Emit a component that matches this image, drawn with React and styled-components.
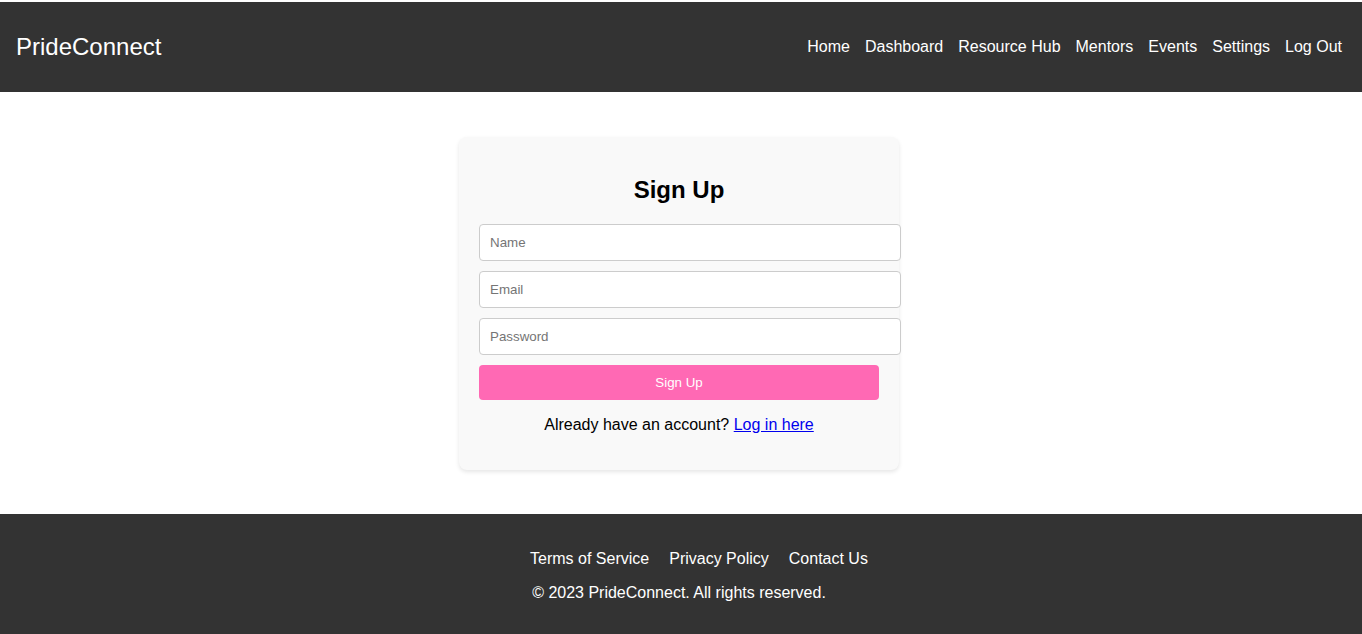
import React from 'react';
import styled, { createGlobalStyle } from 'styled-components';

const GlobalStyle = createGlobalStyle`
  body {
    margin: 0;
    padding-top: 2px;
    background: #fff;
    font-family: "Liberation Sans", Arial, sans-serif;
  }
`;

const Header = styled.header`
  background-color: #333;
  color: #fff;
  height: 90px;
  display: flex;
  align-items: center;
  justify-content: space-between;
  padding: 0 20px 0 16px;
`;

const Logo = styled.div`
  font-size: 24px;
`;

const Nav = styled.nav`
  display: flex;
  gap: 15px;
  margin-top: -1px;
`;

const NavLink = styled.a`
  color: #fff;
  text-decoration: none;
  font-size: 16px;
`;

const Main = styled.main`
  padding: 45px 0 44px;
`;

const Card = styled.div`
  width: 400px;
  margin: 0 auto;
  padding: 20px;
  background-color: #f9f9f9;
  border-radius: 8px;
  box-shadow: 0 2px 4px rgba(0, 0, 0, 0.1);
  position: relative;
  left: -2px;
`;

const Title = styled.h2`
  text-align: center;
  font-size: 24px;
  margin: 19px 0 20px;
  line-height: 28px;
`;

const Form = styled.form`
  display: flex;
  flex-direction: column;
  gap: 10px;
`;

const Input = styled.input`
  width: 100%;
  box-sizing: content-box;
  padding: 10px;
  border: 1px solid #ccc;
  border-radius: 4px;
  font-family: "Liberation Sans", Arial, sans-serif;
  font-size: 13.33px;
  line-height: 15px;
  height: 15px;
  background: #fff;
  &::placeholder {
    color: #757575;
  }
`;

const Button = styled.button`
  width: 400px;
  padding: 10px;
  height: 35px;
  background-color: #ff69b4;
  color: #fff;
  border: none;
  border-radius: 4px;
  font-family: "Liberation Sans", Arial, sans-serif;
  font-size: 13.33px;
`;

const Switch = styled.p`
  text-align: center;
  font-size: 16px;
  line-height: 18px;
  margin: 16px 0 16px;
`;

const TextLink = styled.a`
  color: #0000ee;
  text-decoration: underline;
`;

const Footer = styled.footer`
  background-color: #333;
  color: #fff;
  height: 120px;
  box-sizing: border-box;
  padding: 36px 4px 0 0;
  text-align: center;
`;

const FooterNav = styled.div`
  display: flex;
  justify-content: center;
  gap: 20px;
  padding-left: 40px;
  font-size: 16px;
  line-height: 18px;
`;

const FooterLink = styled.a`
  color: #fff;
  text-decoration: none;
`;

const Copy = styled.p`
  margin: 16px 0 0;
  font-size: 16px;
  line-height: 18px;
`;

const navItems = ['Home', 'Dashboard', 'Resource Hub', 'Mentors', 'Events', 'Settings', 'Log Out'];

export default function App() {
  return (
    <>
      <GlobalStyle />
      <Header>
        <Logo>PrideConnect</Logo>
        <Nav>
          {navItems.map((item) => (
            <NavLink key={item} href="#">{item}</NavLink>
          ))}
        </Nav>
      </Header>
      <Main>
        <Card>
          <Title>Sign Up</Title>
          <Form onSubmit={(e) => e.preventDefault()}>
            <Input type="text" placeholder="Name" />
            <Input type="email" placeholder="Email" />
            <Input type="password" placeholder="Password" />
            <Button type="submit">Sign Up</Button>
          </Form>
          <Switch>
            Already have an account? <TextLink href="#">Log in here</TextLink>
          </Switch>
        </Card>
      </Main>
      <Footer>
        <FooterNav>
          <FooterLink href="#">Terms of Service</FooterLink>
          <FooterLink href="#">Privacy Policy</FooterLink>
          <FooterLink href="#">Contact Us</FooterLink>
        </FooterNav>
        <Copy>© 2023 PrideConnect. All rights reserved.</Copy>
      </Footer>
    </>
  );
}
